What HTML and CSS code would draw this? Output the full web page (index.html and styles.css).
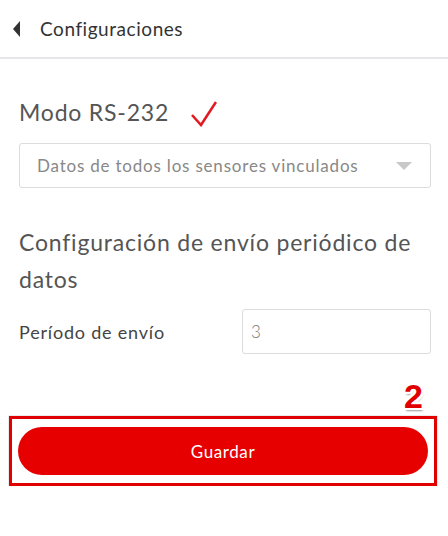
FILE: index.html
```html
<!DOCTYPE html>
<html lang="es">
<head>
  <meta charset="UTF-8">
  <title>Configuraciones</title>
  <link rel="stylesheet" href="styles.css">
</head>
<body>
  <div class="header">
    <span class="back"></span>
    <span class="title">Configuraciones</span>
  </div>

  <div class="content">
    <div class="mode">
      <h2>Modo RS-232</h2>
      <svg class="check" width="26" height="27" viewBox="0 0 26 27">
        <path d="M1 15 L10 25 L25 2" fill="none" stroke="#e21b23" stroke-width="2.6" stroke-linejoin="miter"/>
      </svg>
    </div>

    <div class="select">
      <span>Datos de todos los sensores vinculados</span>
      <span class="arrow"></span>
    </div>

    <h2 class="section">Configuración de envío periódico de datos</h2>

    <div class="field">
      <label>Período de envío</label>
      <div class="input">3</div>
    </div>

    <div class="save-wrap">
      <span class="badge">2</span>
      <button class="save">Guardar</button>
    </div>
  </div>
</body>
</html>
```

FILE: styles.css
```css
body {
  margin: 0;
  background: #fff;
  font-family: "Lato", "Liberation Sans", sans-serif;
  color: #555;
  letter-spacing: 0.8px;
}

.header {
  height: 59px;
  display: flex;
  align-items: center;
  border-bottom: 2px solid #e6e6ea;
  box-sizing: border-box;
  padding-left: 13px;
}

.back {
  width: 0;
  height: 0;
  border-top: 8px solid transparent;
  border-bottom: 8px solid transparent;
  border-right: 7px solid #333;
  margin-right: 20px;
}

.header .title {
  font-size: 19px;
  color: #333;
  letter-spacing: 0.55px;
}

.content {
  padding: 0 17px 0 19px;
}

.mode {
  display: flex;
  align-items: center;
  margin-top: 38px;
  height: 30px;
}

.mode h2 {
  margin: 0;
  font-size: 23px;
  font-weight: normal;
  color: #555;
}

.check {
  margin-left: 22px;
  margin-top: 2px;
}

.select {
  margin-top: 16px;
  height: 45px;
  border: 1px solid #dcdcdc;
  border-radius: 3px;
  box-sizing: border-box;
  display: flex;
  align-items: center;
  justify-content: space-between;
  padding: 0 18px 0 17px;
  font-size: 17px;
  color: #888;
}

.arrow {
  width: 0;
  height: 0;
  border-left: 8px solid transparent;
  border-right: 8px solid transparent;
  border-top: 8px solid #c8c8c8;
}

.section {
  margin: 36px 0 0;
  font-size: 23px;
  font-weight: normal;
  line-height: 37px;
  color: #555;
}

.field {
  display: flex;
  align-items: center;
  justify-content: space-between;
  margin-top: 11px;
}

.field label {
  font-size: 18px;
  color: #444;
}

.input {
  width: 189px;
  height: 45px;
  border: 1px solid #dcdcdc;
  border-radius: 3px;
  box-sizing: border-box;
  display: flex;
  align-items: center;
  padding-left: 8px;
  font-size: 17px;
  color: #777;
  font-weight: 300;
}

.save-wrap {
  position: relative;
  margin: 62px 0 0 -10px;
  width: 428px;
  height: 70px;
  border: 3px solid #e00000;
  box-sizing: border-box;
  display: flex;
  align-items: center;
  padding: 0 6px;
  box-shadow: 0 0 1px #888;
}

.save {
  width: 100%;
  height: 48px;
  border: none;
  border-radius: 24px;
  background: #e60000;
  color: #fff;
  font-family: "Lato", "Liberation Sans", sans-serif;
  font-size: 17px;
  letter-spacing: 0.6px;
}

.badge {
  position: absolute;
  right: 11px;
  top: -42px;
  font-family: "Liberation Sans", sans-serif;
  font-weight: bold;
  font-size: 34px;
  letter-spacing: 0;
  color: #e00000;
  text-shadow: -2px 0 #fff, 2px 0 #fff, 0 -2px #fff, 0 2px #fff,
    -2px -2px #fff, 2px 2px #fff, -2px 2px #fff, 2px -2px #fff,
    1px 3px 2px #999;
}
```
